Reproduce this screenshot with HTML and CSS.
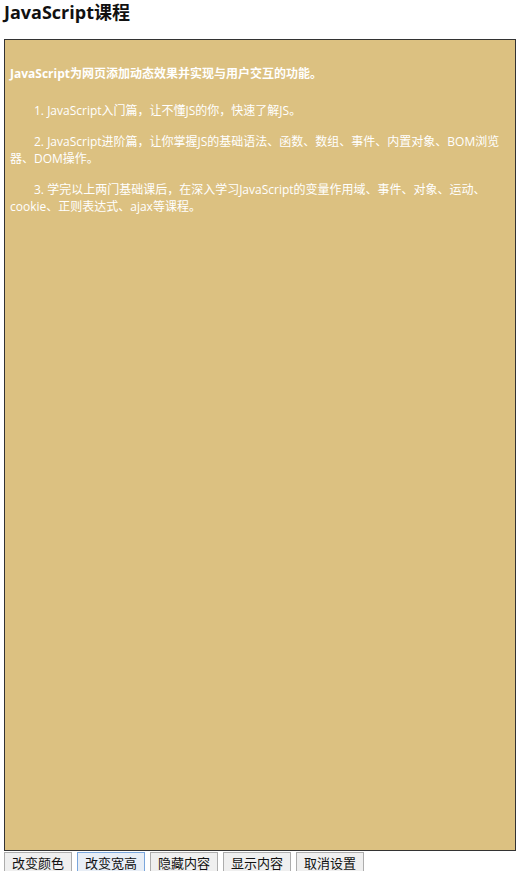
FILE: index.html
```html
<!DOCTYPE html>
<html lang="zh">
<head>
<meta charset="utf-8">
<title>JavaScript课程</title>
<link rel="stylesheet" href="styles.css">
</head>
<body>
<h2 class="title">JavaScript课程</h2>
<div class="txt">
  <h5 class="lead">JavaScript为网页添加动态效果并实现与用户交互的功能。</h5>
  <p class="para">1. JavaScript入门篇，让不懂JS的你，快速了解JS。</p>
  <p class="para">2. JavaScript进阶篇，让你掌握JS的基础语法、函数、数组、事件、内置对象、BOM浏览器、DOM操作。</p>
  <p class="para">3. 学完以上两门基础课后，在深入学习JavaScript的变量作用域、事件、对象、运动、cookie、正则表达式、ajax等课程。</p>
</div>
<div class="btns">
  <button class="btn">改变颜色</button>
  <button class="btn btn-focus">改变宽高</button>
  <button class="btn">隐藏内容</button>
  <button class="btn">显示内容</button>
  <button class="btn">取消设置</button>
</div>
</body>
</html>
```
FILE: styles.css
```css
html, body {
  margin: 0;
  padding: 0;
  background: #fff;
}
body {
  padding: 0 4px;
  font-family: "Open Sans", "Noto Sans CJK SC", sans-serif;
  color: #000;
}
.title {
  margin: 0;
  padding-top: 0;
  font-size: 18px;
  line-height: 24px;
  height: 39px;
  font-weight: bold;
  color: #111;
}
.txt {
  width: 500px;
  height: 800px;
  padding: 5px;
  border: 1px solid #333;
  background: #dcc181;
  color: #fff;
  font-size: 12px;
  line-height: 17px;
  overflow: hidden;
}
.lead {
  margin: 20px 0 20px;
  font-size: 12px;
  line-height: 17px;
  font-weight: bold;
}
.para {
  margin: 0 0 14px;
  text-indent: 24px;
}
.btns {
  display: flex;
  gap: 5px;
  margin-top: 1px;
}
.btn {
  width: 68px;
  height: 21px;
  padding: 0;
  margin: 0;
  font-family: "Noto Sans CJK SC", sans-serif;
  font-size: 13px;
  line-height: 19px;
  color: #111;
  background: #efefef;
  border: 1px solid #adadad;
  border-radius: 0;
}
.btn-focus {
  border-color: #7aa6dc;
  background: #e8eef6;
}
```
